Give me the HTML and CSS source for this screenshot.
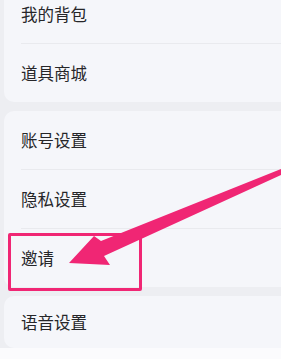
FILE: index.html
```html
<!DOCTYPE html>
<html lang="zh">
<head>
    <meta charset="UTF-8">
    <title>设置</title>
    <link rel="stylesheet" href="styles.css">
</head>
<body>
<div class="page">
    <div class="card">
        <div class="row">我的背包</div>
        <div class="row">道具商城</div>
    </div>
    <div class="card">
        <div class="row">账号设置</div>
        <div class="row">隐私设置</div>
        <div class="row">邀请</div>
    </div>
    <div class="card">
        <div class="row short">语音设置</div>
    </div>
</div>
<div class="mark"></div>
<svg class="arrow" width="281" height="359" viewBox="0 0 281 359">
    <polygon points="281,169 101,241 94,236 69,263 110,265 104,256 281,175" fill="#f02674"/>
</svg>
</body>
</html>
```

FILE: styles.css
```css
html, body {
    margin: 0;
    padding: 0;
}

body {
    background-color: #fbfbfd;
    font-family: "Noto Sans CJK SC", "Noto Sans", sans-serif;
    overflow: hidden;
    height: 359px;
    position: relative;
}

.page {
    background-color: #edeef2;
    margin-top: -15px;
    padding: 0 0 0 4px;
    display: flex;
    flex-direction: column;
    gap: 9px;
}

.card {
    background-color: #f5f6fa;
    border-radius: 10px;
    margin-right: -12px;
    padding-left: 17px;
}

.row {
    height: 58px;
    line-height: 58px;
    font-size: 16.5px;
    color: #262629;
    border-bottom: 1px solid #e9eaee;
}

.row:last-child {
    border-bottom: none;
}

.row.short {
    height: 52px;
    line-height: 52px;
}

.mark {
    position: absolute;
    left: 8px;
    top: 233px;
    width: 128px;
    height: 52px;
    border: 3px solid #f02674;
    border-radius: 2px;
}

.arrow {
    position: absolute;
    left: 0;
    top: 0;
}
```
